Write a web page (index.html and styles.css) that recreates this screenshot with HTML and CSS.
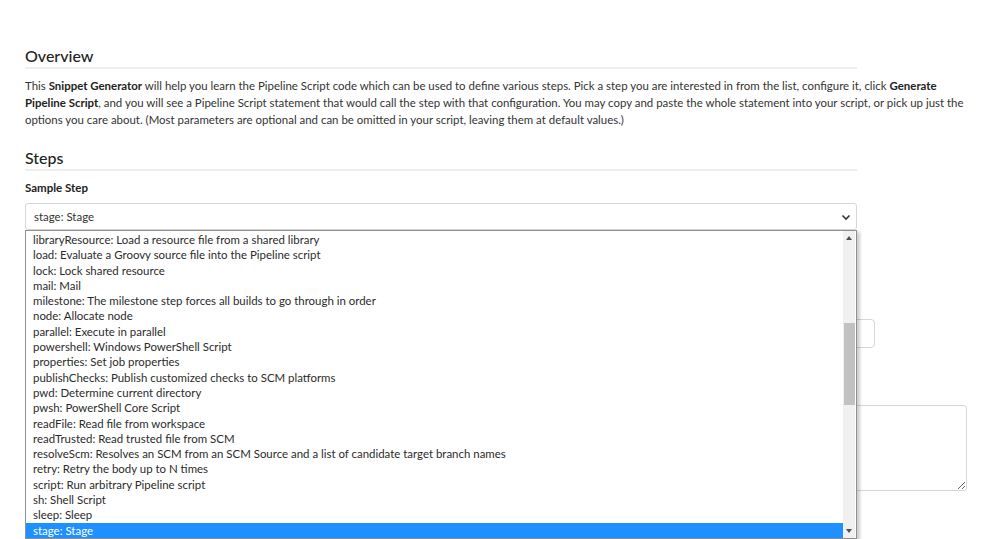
FILE: index.html
```html
<!DOCTYPE html>
<html lang="en">
  <head>
    <meta charset="UTF-8" />
    <title>Pipeline Syntax - Snippet Generator</title>
    <link rel="stylesheet" href="styles.css">
  </head>
  <body>
    <main class="page">
      <h2 class="section-title">Overview</h2>
      <p class="intro">
        This <strong>Snippet Generator</strong> will help you learn the Pipeline Script code which can be used to define various steps. Pick a step you are interested in from the list, configure it, click <strong>Generate Pipeline Script</strong>, and you will see a Pipeline Script statement that would call the step with that configuration. You may copy and paste the whole statement into your script, or pick up just the options you care about. (Most parameters are optional and can be omitted in your script, leaving them at default values.)
      </p>

      <h2 class="section-title">Steps</h2>
      <label class="field-label">Sample Step</label>

      <div class="select-wrap">
        <div class="select-box">
          <span>stage: Stage</span>
          <svg class="chevron" width="10" height="8" viewBox="0 0 10 8">
            <path d="M1.5 2.5 L5 6 L8.5 2.5" fill="none" stroke="#333" stroke-width="1.6" />
          </svg>
        </div>

        <div class="dropdown">
          <ul class="options">
            <li>libraryResource: Load a resource file from a shared library</li>
            <li>load: Evaluate a Groovy source file into the Pipeline script</li>
            <li>lock: Lock shared resource</li>
            <li>mail: Mail</li>
            <li>milestone: The milestone step forces all builds to go through in order</li>
            <li>node: Allocate node</li>
            <li>parallel: Execute in parallel</li>
            <li>powershell: Windows PowerShell Script</li>
            <li>properties: Set job properties</li>
            <li>publishChecks: Publish customized checks to SCM platforms</li>
            <li>pwd: Determine current directory</li>
            <li>pwsh: PowerShell Core Script</li>
            <li>readFile: Read file from workspace</li>
            <li>readTrusted: Read trusted file from SCM</li>
            <li>resolveScm: Resolves an SCM from an SCM Source and a list of candidate target branch names</li>
            <li>retry: Retry the body up to N times</li>
            <li>script: Run arbitrary Pipeline script</li>
            <li>sh: Shell Script</li>
            <li>sleep: Sleep</li>
            <li class="selected">stage: Stage</li>
          </ul>
          <div class="scrollbar">
            <span class="arrow up"></span>
            <span class="thumb"></span>
            <span class="arrow down"></span>
          </div>
        </div>
      </div>

      <div class="step-config">
        <label class="field-label">Stage Name</label>
        <input class="text-input" type="text" />
        <label class="field-label">Body</label>
        <textarea class="text-area"></textarea>
      </div>
    </main>
  </body>
</html>
```

FILE: styles.css
```css
* {
  box-sizing: border-box;
}
body {
  margin: 0;
  font-family: Lato, "Noto Sans", sans-serif;
  color: #333;
  background: #fff;
}
.page {
  padding: 46px 26px 120px 25px;
}
.section-title {
  width: 832px;
  margin: 0 0 8px;
  padding-bottom: 2px;
  font-size: 16px;
  font-weight: 500;
  color: #222;
  border-bottom: 2px solid #eee;
}
.intro {
  margin: 0 0 20px;
  font-size: 11.45px;
  line-height: 17px;
}
.intro strong {
  color: #222;
}
.field-label {
  display: block;
  margin: 0 0 9px;
  padding-top: 2px;
  font-size: 11.5px;
  font-weight: 700;
  color: #222;
}
.select-wrap {
  position: relative;
  width: 832px;
}
.select-box {
  display: flex;
  align-items: center;
  justify-content: space-between;
  height: 27px;
  padding: 0 8px;
  border: 1px solid #d4d7dc;
  border-radius: 3px;
  font-size: 11.45px;
  color: #333;
}
.chevron {
  margin-right: -3px;
}
.dropdown {
  position: absolute;
  top: 27px;
  left: 0;
  width: 832px;
  display: flex;
  background: #fff;
  border: 1px solid #8f8f8f;
  box-shadow: 3px 2px 3px rgba(0, 0, 0, 0.2);
  z-index: 2;
}
.options {
  flex: 1;
  margin: 0;
  padding: 1px 0 0;
  list-style: none;
  font-size: 11.45px;
  line-height: 15.3px;
  color: #2b2b2b;
}
.options li {
  padding-left: 7px;
  white-space: nowrap;
}
.options li.selected {
  background: #1e90ff;
  color: #fff;
}
.scrollbar {
  position: relative;
  width: 12px;
  margin-right: 1px;
  background: #f0f0f0;
}
.thumb {
  position: absolute;
  left: 1px;
  right: 0;
  top: 92px;
  height: 82px;
  background: #c1c1c1;
}
.arrow {
  position: absolute;
  left: 3px;
  width: 0;
  height: 0;
  border-left: 3.5px solid transparent;
  border-right: 3.5px solid transparent;
}
.arrow.up {
  top: 5px;
  border-bottom: 4px solid #505050;
}
.arrow.down {
  bottom: 5px;
  border-top: 4px solid #505050;
}
.step-config {
  padding-top: 65px;
}
.step-config .field-label {
  visibility: hidden;
}
.text-input {
  display: block;
  width: 850px;
  height: 29px;
  margin-bottom: 33px;
  border: 1px solid #d4d7dc;
  border-radius: 4px;
}
.text-area {
  display: block;
  width: 942px;
  height: 86px;
  border: 1px solid #d4d7dc;
  border-radius: 3px;
}
```
